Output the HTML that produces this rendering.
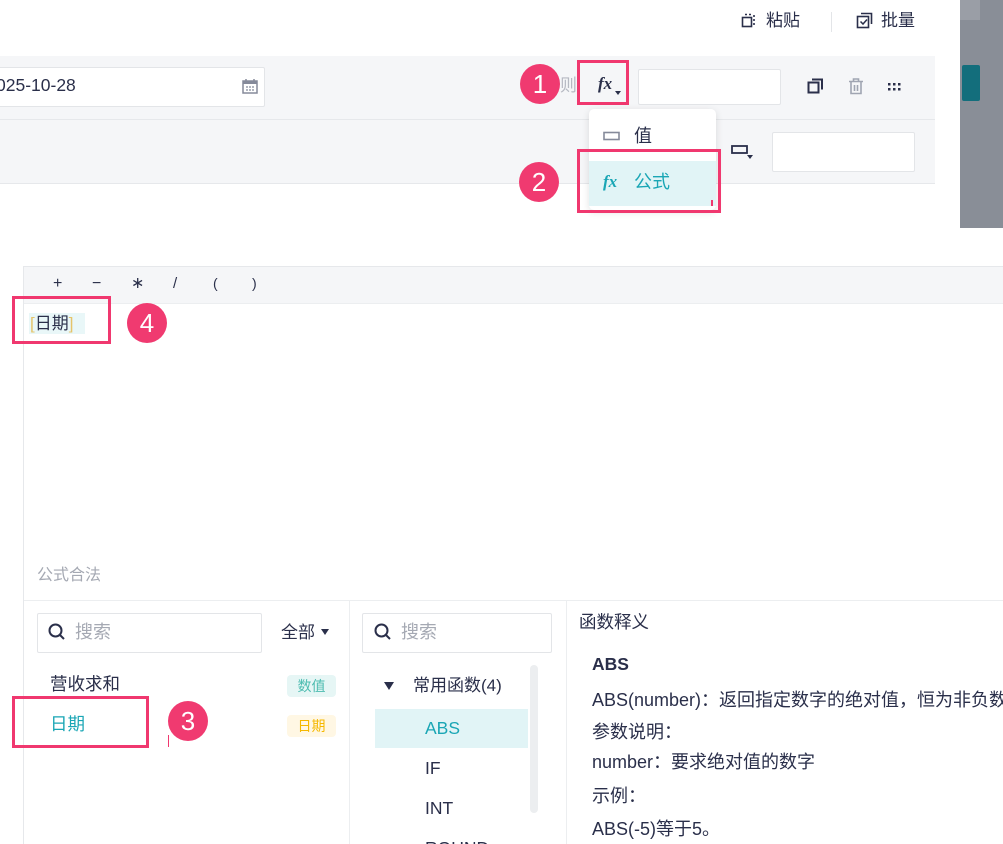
<!DOCTYPE html>
<html><head><meta charset="utf-8"><style>
*{margin:0;padding:0;box-sizing:border-box}
html,body{width:1003px;height:844px;overflow:hidden}
body{background:#fff;position:relative;font-family:"Liberation Sans","Noto Sans CJK SC",sans-serif;color:#2a2f4a;font-size:16px}
.a{position:absolute}
.badge{position:absolute;width:40px;height:40px;border-radius:50%;background:#f03a70;color:#fff;font-size:26px;text-align:center;line-height:40px}
.pbox{position:absolute;border:3px solid #f0386f}
.inp{position:absolute;background:#fff;border:1px solid #e3e5e8;border-radius:2px}
.t{position:absolute;white-space:nowrap;line-height:1}
</style></head><body>
<div class="a" style="left:960px;top:0;width:43px;height:228px;background:#898e97"></div>
<div class="a" style="left:960px;top:0;width:20px;height:20px;background:#9a9ea6"></div>
<div class="a" style="left:962px;top:65px;width:18px;height:36px;background:#136e7c;border-radius:2px"></div>
<svg class="a" style="left:741px;top:13px" width="16" height="16"><rect x="1.5" y="4.5" width="9" height="9" fill="none" stroke="#2a2f4a" stroke-width="1.6"/><path d="M13 2v2M13 6v2M13 10v2M4 1.5h2M8 1.5h2" stroke="#2a2f4a" stroke-width="1.6"/></svg>
<div class="t" style="left:766px;top:12px;font-size:17px">粘贴</div>
<div class="a" style="left:831px;top:12px;width:1px;height:20px;background:#e3e5e8"></div>
<svg class="a" style="left:856px;top:12px" width="17" height="17"><rect x="1.5" y="4.5" width="11" height="11" fill="none" stroke="#2a2f4a" stroke-width="1.6"/><path d="M5 1.5h10.5V12" fill="none" stroke="#2a2f4a" stroke-width="1.6"/><path d="M4.5 9.5l2.5 2.5 4-4.5" fill="none" stroke="#2a2f4a" stroke-width="1.5"/></svg>
<div class="t" style="left:881px;top:12px;font-size:17px">批量</div>
<div class="a" style="left:0;top:56px;width:935px;height:128px;background:#f5f6f8;border-bottom:1px solid #e6e8eb"></div>
<div class="a" style="left:0;top:119px;width:935px;height:1px;background:#e6e8eb"></div>
<div class="inp" style="left:-2px;top:67px;width:267px;height:40px"></div>
<div class="t" style="left:-4px;top:77px;font-size:17.5px">025-10-28</div>
<svg class="a" style="left:242px;top:78px" width="16" height="16"><rect x="1" y="3" width="14" height="12" fill="none" stroke="#858a9a" stroke-width="1.5"/><rect x="1" y="3" width="14" height="3" fill="#858a9a"/><path d="M4 1v3M12 1v3" stroke="#858a9a" stroke-width="1.5"/><path d="M4 9h2M7 9h2M10 9h2M4 12h2M7 12h2M10 12h2" stroke="#858a9a" stroke-width="1.3"/></svg>
<div class="t" style="left:560px;top:77px;font-size:17px;color:#b6b9c2">则</div>
<div class="badge" style="left:520px;top:64px">1</div>
<div class="pbox" style="left:577px;top:60px;width:52px;height:45px"></div>
<div class="t" style="left:598px;top:75px;font-size:17px;font-style:italic;font-weight:bold;font-family:'Liberation Serif',serif">fx</div>
<div class="a" style="left:615px;top:91px;border:3.5px solid transparent;border-top:4px solid #2a2f4a"></div>
<div class="inp" style="left:638px;top:69px;width:143px;height:36px"></div>
<svg class="a" style="left:807px;top:78px" width="17" height="17"><rect x="1.5" y="4.5" width="10" height="10" fill="none" stroke="#2a2f4a" stroke-width="2"/><path d="M5 1.5h10v10" fill="none" stroke="#2a2f4a" stroke-width="2"/></svg>
<svg class="a" style="left:848px;top:78px" width="16" height="17"><path d="M1 3.5h14M5.5 3V1h5v2M3 4v11.5h10V4M6.5 7v6M9.5 7v6" fill="none" stroke="#a0a5b2" stroke-width="1.6"/></svg>
<svg class="a" style="left:888px;top:83px" width="16" height="8"><g fill="#2a2f4a"><rect x="0" y="0" width="2.5" height="2.5"/><rect x="5" y="0" width="2.5" height="2.5"/><rect x="10" y="0" width="2.5" height="2.5"/><rect x="0" y="5" width="2.5" height="2.5"/><rect x="5" y="5" width="2.5" height="2.5"/><rect x="10" y="5" width="2.5" height="2.5"/></g></svg>
<svg class="a" style="left:731px;top:144px" width="24" height="16"><rect x="1" y="2" width="15" height="7" fill="none" stroke="#2a2f4a" stroke-width="1.8"/><path d="M16 11h6l-3 4z" fill="#2a2f4a"/></svg>
<div class="inp" style="left:772px;top:132px;width:143px;height:40px"></div>
<div class="a" style="left:589px;top:109px;width:127px;height:101px;background:#fff;border-radius:5px;box-shadow:0 2px 8px rgba(0,0,0,.12)"></div>
<svg class="a" style="left:603px;top:131px" width="18" height="10"><rect x="1" y="1.5" width="15" height="7" fill="none" stroke="#858a9a" stroke-width="1.6"/></svg>
<div class="t" style="left:634px;top:127px;font-size:18px">值</div>
<div class="a" style="left:589px;top:161px;width:127px;height:45px;background:#e1f4f6"></div>
<div class="t" style="left:603px;top:173px;font-size:17px;font-style:italic;font-weight:bold;color:#1aa6b5;font-family:'Liberation Serif',serif">fx</div>
<div class="t" style="left:634px;top:173px;font-size:18px;color:#1aa6b5">公式</div>
<div class="pbox" style="left:577px;top:149px;width:144px;height:64px"></div>
<div class="a" style="left:711px;top:200px;width:2px;height:6px;background:#f0386f"></div>
<div class="badge" style="left:519px;top:162px">2</div>
<div class="a" style="left:23px;top:266px;width:990px;height:600px;border-left:1px solid #e6e8eb;border-top:1px solid #e6e8eb"></div>
<div class="a" style="left:24px;top:267px;width:979px;height:37px;background:#f5f6f8;border-bottom:1px solid #eceef0"></div>
<div class="t" style="left:53px;top:276px;font-size:16px">+</div>
<div class="t" style="left:92px;top:276px;font-size:16px">−</div>
<div class="t" style="left:131px;top:276px;font-size:16px">∗</div>
<div class="t" style="left:173px;top:276px;font-size:15px">/</div>
<div class="t" style="left:213px;top:276px;font-size:14px">(</div>
<div class="t" style="left:252px;top:276px;font-size:14px">)</div>
<div class="a" style="left:29px;top:313px;width:56px;height:21px;background:#e9f7f8"></div>
<div class="t" style="left:30px;top:315px;font-size:17px"><span style="color:#e5c46a">[</span>日期<span style="color:#e5c46a">]</span></div>
<div class="pbox" style="left:12px;top:296px;width:99px;height:48px"></div>
<div class="badge" style="left:127px;top:303px">4</div>
<div class="t" style="left:37px;top:568px;font-size:16px;color:#a5a9b3">公式合法</div>
<div class="a" style="left:24px;top:600px;width:979px;height:1px;background:#eceef0"></div>
<div class="a" style="left:349px;top:600px;width:1px;height:244px;background:#eceef0"></div>
<div class="a" style="left:566px;top:600px;width:1px;height:244px;background:#eceef0"></div>
<div class="inp" style="left:37px;top:613px;width:225px;height:40px"></div>
<svg class="a" style="left:48px;top:623px" width="18" height="18"><circle cx="7.5" cy="7.5" r="6" fill="none" stroke="#2a2f4a" stroke-width="2"/><path d="M12 12l4 4" stroke="#2a2f4a" stroke-width="2"/></svg>
<div class="t" style="left:75px;top:623px;font-size:18px;color:#a5a9b3">搜索</div>
<div class="t" style="left:281px;top:624px;font-size:17px">全部</div>
<div class="a" style="left:321px;top:629px;border:4px solid transparent;border-top:6px solid #2a2f4a"></div>
<div class="t" style="left:50px;top:676px;font-size:17.5px">营收求和</div>
<div class="a" style="left:287px;top:675px;width:49px;height:22px;background:#e6f6f5;border-radius:4px;color:#4cbcb0;font-size:14px;text-align:center;line-height:22px">数值</div>
<div class="t" style="left:50px;top:716px;font-size:17.5px;color:#1aa6b5">日期</div>
<div class="a" style="left:287px;top:715px;width:49px;height:22px;background:#fff7e4;border-radius:4px;color:#f5b800;font-size:14px;text-align:center;line-height:22px">日期</div>
<div class="pbox" style="left:12px;top:696px;width:137px;height:52px"></div>
<div class="a" style="left:168px;top:735px;width:1px;height:12px;background:#f0386f"></div>
<div class="badge" style="left:168px;top:701px">3</div>
<div class="inp" style="left:362px;top:613px;width:190px;height:40px"></div>
<svg class="a" style="left:374px;top:623px" width="18" height="18"><circle cx="7.5" cy="7.5" r="6" fill="none" stroke="#2a2f4a" stroke-width="2"/><path d="M12 12l4 4" stroke="#2a2f4a" stroke-width="2"/></svg>
<div class="t" style="left:401px;top:623px;font-size:18px;color:#a5a9b3">搜索</div>
<div class="a" style="left:530px;top:665px;width:8px;height:148px;background:#eceef0;border-radius:4px"></div>
<div class="a" style="left:384px;top:682px;border:5px solid transparent;border-top:8px solid #2a2f4a;border-bottom:0"></div>
<div class="t" style="left:413px;top:677px;font-size:17px">常用函数(4)</div>
<div class="a" style="left:375px;top:709px;width:153px;height:39px;background:#e1f4f6"></div>
<div class="t" style="left:425px;top:720px;font-size:17.5px;color:#1aa6b5">ABS</div>
<div class="t" style="left:425px;top:760px;font-size:17.5px">IF</div>
<div class="t" style="left:425px;top:800px;font-size:17.5px">INT</div>
<div class="t" style="left:425px;top:840px;font-size:17.5px">ROUND</div>
<div class="t" style="left:579px;top:614px;font-size:17.5px">函数释义</div>
<div class="t" style="left:592px;top:656px;font-size:17.5px;font-weight:bold">ABS</div>
<div class="t" style="left:592px;top:691px;font-size:18px">ABS(number)：返回指定数字的绝对值，恒为非负数。</div>
<div class="t" style="left:592px;top:723px;font-size:18px">参数说明：</div>
<div class="t" style="left:592px;top:753px;font-size:18px">number：要求绝对值的数字</div>
<div class="t" style="left:592px;top:787px;font-size:18px">示例：</div>
<div class="t" style="left:592px;top:820px;font-size:18px">ABS(-5)等于5。</div>
</body></html>
